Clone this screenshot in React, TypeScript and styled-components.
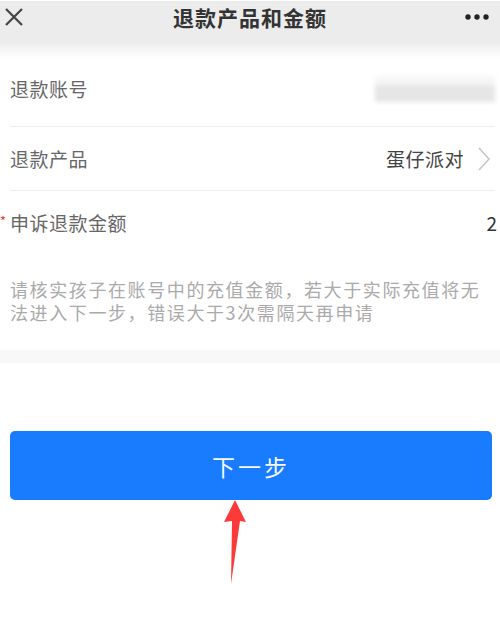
import React from 'react';
import styled, { createGlobalStyle } from 'styled-components';

const GlobalStyle = createGlobalStyle`
  html, body {
    margin: 0;
    padding: 0;
    background: #ffffff;
  }
  body {
    font-family: "Noto Sans CJK SC", "Noto Sans", sans-serif;
  }
`;

const Page = styled.div`
  width: 500px;
  height: 619px;
  overflow: hidden;
  background: #ffffff;
  display: flex;
  flex-direction: column;
`;

const NavBar = styled.div`
  height: 44px;
  border-top: 1px solid #ffffff;
  background: #ececec;
  display: flex;
  align-items: flex-start;
  justify-content: space-between;
  padding: 2px 10px 0 4px;
  box-sizing: border-box;
  position: relative;
`;

const Title = styled.div`
  position: absolute;
  left: 0;
  right: 0;
  top: 0;
  text-align: center;
  font-size: 21px;
  line-height: 32px;
  font-weight: 700;
  letter-spacing: 1px;
  color: #333333;
  pointer-events: none;
`;

const NavButton = styled.div`
  display: flex;
  align-items: center;
  height: 28px;
`;

const Fade = styled.div`
  height: 14px;
  background: linear-gradient(#eeeeee, #ffffff);
`;

const Form = styled.div`
  padding-left: 10px;
  padding-right: 5px;
`;

const Row = styled.div<{ $h: number; $pb?: number }>`
  height: ${(p) => p.$h}px;
  display: flex;
  align-items: center;
  justify-content: space-between;
  padding-bottom: ${(p) => p.$pb ?? 0}px;
  border-bottom: 1px solid #eeeeee;
  box-sizing: border-box;
`;

const Label = styled.div`
  font-size: 19px;
  color: #666666;
  letter-spacing: 0.5px;
  position: relative;
`;

const Required = styled.span`
  position: absolute;
  left: -10px;
  top: 2px;
  color: #f0383c;
  font-size: 13px;
`;

const Value = styled.div`
  display: flex;
  align-items: center;
  gap: 14px;
  margin-right: 5px;
  font-size: 19px;
  color: #444444;
  letter-spacing: 0.5px;
`;

const Blurred = styled.div`
  width: 120px;
  height: 26px;
  margin-top: 2px;
  background: linear-gradient(#f6f6f6 0 35%, #e6e6e6 35% 100%);
  filter: blur(2px);
`;

const AmountBlock = styled.div`
  padding-top: 19px;
  height: 159px;
  box-sizing: border-box;
`;

const AmountHead = styled.div`
  display: flex;
  justify-content: space-between;
  align-items: center;
  height: 24px;
`;

const Amount = styled.div`
  font-size: 19px;
  color: #333333;
  margin-right: -2px;
`;

const Hint = styled.p`
  margin: 44px 0 0;
  font-size: 18px;
  line-height: 23px;
  letter-spacing: 1.6px;
  color: #aaaaaa;
`;

const Band = styled.div`
  height: 13px;
  background: #f8f8f8;
`;

const Actions = styled.div`
  padding: 68px 8px 0 10px;
  position: relative;
`;

const Button = styled.button`
  width: 100%;
  height: 69px;
  border: none;
  border-radius: 5px;
  background: #197bfe;
  color: #f4f8ff;
  font-family: "Noto Sans CJK SC", "Noto Sans", sans-serif;
  font-size: 23px;
  letter-spacing: 3px;
  display: flex;
  align-items: center;
  justify-content: center;
`;

const Arrow = styled.svg`
  position: absolute;
  left: 220px;
  top: 137px;
`;

export default function App() {
  return (
    <Page>
      <GlobalStyle />
      <NavBar>
        <NavButton>
          <svg width="20" height="20" viewBox="0 0 20 20">
            <path d="M2 2 L18 18 M18 2 L2 18" stroke="#444" strokeWidth="2.2" fill="none" />
          </svg>
        </NavButton>
        <Title>退款产品和金额</Title>
        <NavButton>
          <svg width="26" height="8" viewBox="0 0 26 8">
            <circle cx="4" cy="4" r="2.7" fill="#222" />
            <circle cx="13" cy="4" r="2.7" fill="#222" />
            <circle cx="22" cy="4" r="2.7" fill="#222" />
          </svg>
        </NavButton>
      </NavBar>
      <Fade />
      <Form>
        <Row $h={69} $pb={8}>
          <Label>退款账号</Label>
          <Blurred />
        </Row>
        <Row $h={64}>
          <Label>退款产品</Label>
          <Value>
            蛋仔派对
            <svg width="12" height="24" viewBox="0 0 12 24">
              <path d="M1 1 L11 12 L1 23" stroke="#c4c4c4" strokeWidth="1.5" fill="none" />
            </svg>
          </Value>
        </Row>
        <AmountBlock>
          <AmountHead>
            <Label>
              <Required>*</Required>
              申诉退款金额
            </Label>
            <Amount>2</Amount>
          </AmountHead>
          <Hint>请核实孩子在账号中的充值金额，若大于实际充值将无法进入下一步，错误大于3次需隔天再申请</Hint>
        </AmountBlock>
      </Form>
      <Band />
      <Actions>
        <Button>下一步</Button>
        <Arrow width="30" height="86" viewBox="0 0 30 86">
          <polygon points="15,0 26,22 20,21 11,84 12,21 4,22" fill="#fd3a3a" />
        </Arrow>
      </Actions>
    </Page>
  );
}
